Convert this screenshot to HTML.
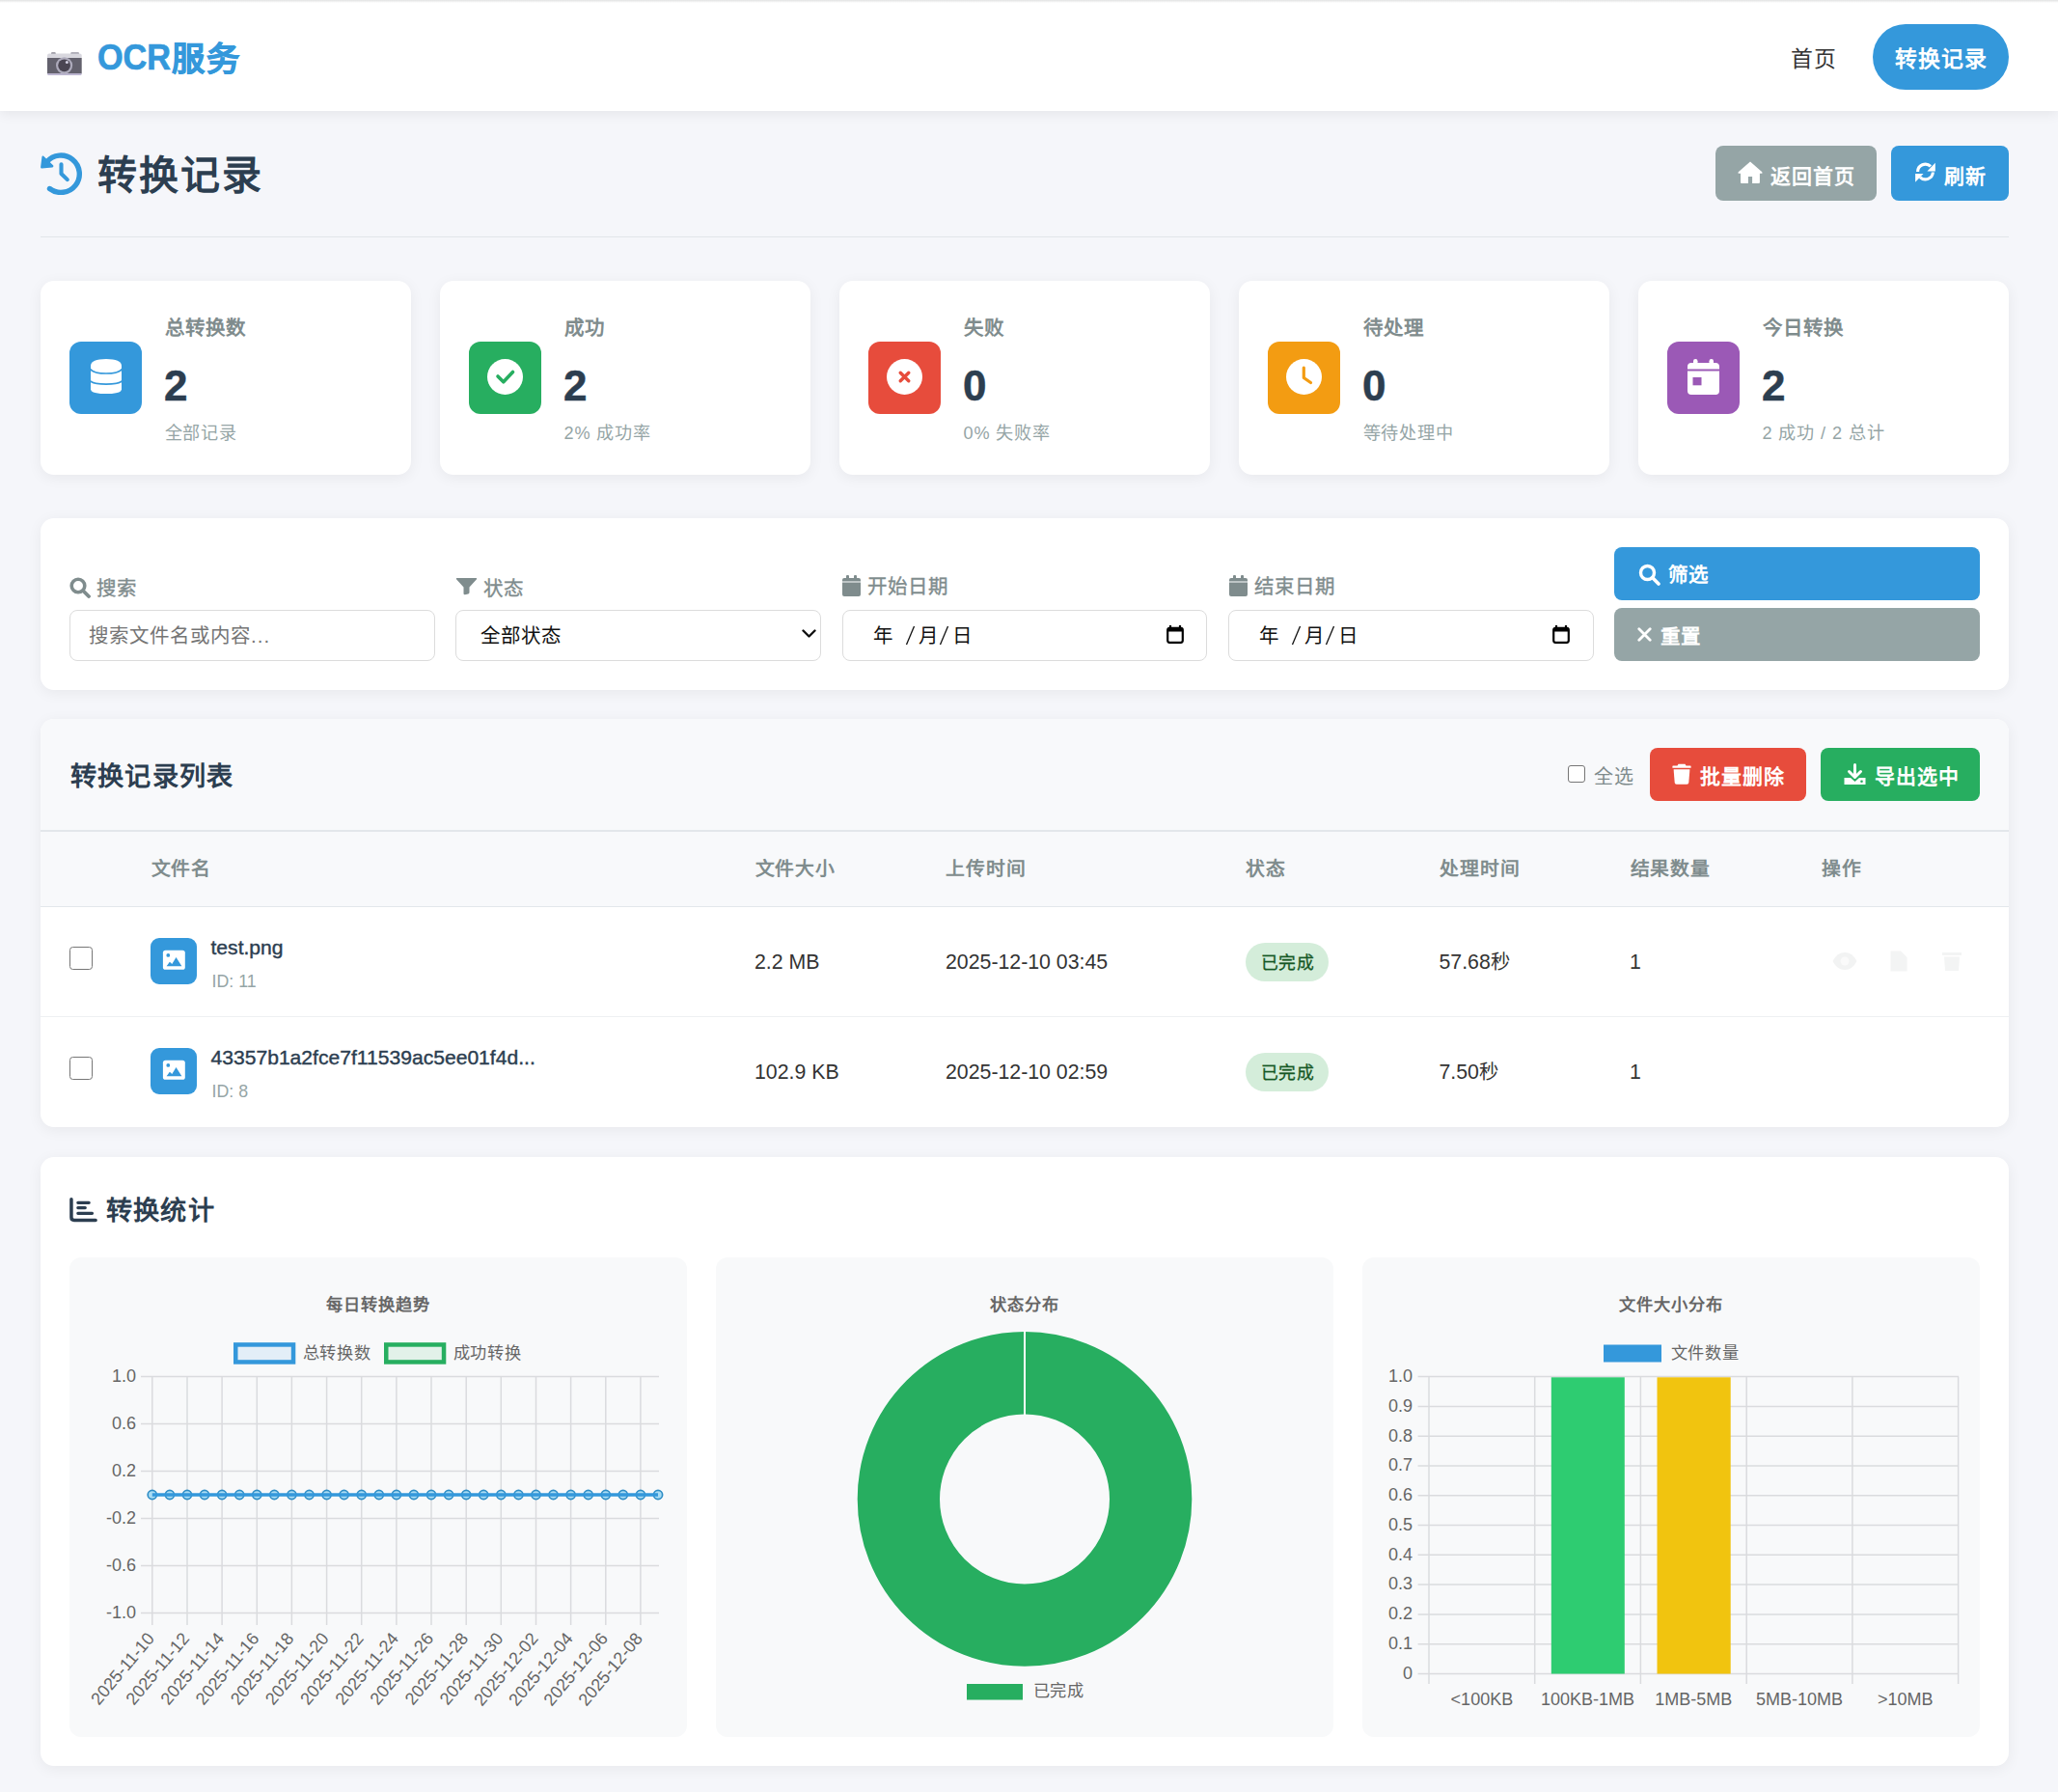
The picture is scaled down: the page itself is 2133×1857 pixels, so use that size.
<!DOCTYPE html>
<html lang="zh-CN">
<head>
<meta charset="utf-8">
<title>OCR服务 - 转换记录</title>
<style>
*{box-sizing:border-box;margin:0;padding:0}
html,body{width:2133px;height:1857px;overflow:hidden}
body{position:relative;background:#f5f6fa;font-family:"Liberation Sans",sans-serif;color:#333}
.a{position:absolute;white-space:nowrap}
.card{position:absolute;background:#fff;border-radius:14px;box-shadow:0 3px 15px rgba(0,0,0,0.06)}
</style>
</head>
<body>

<div class="a" style="left:0.0px;top:0.0px;width:2133.0px;height:115.0px;background:#fff;border-radius:0px;box-shadow:0 3px 12px rgba(0,0,0,0.07)"></div>
<div class="a" style="left:0.0px;top:0.0px;width:2133.0px;height:3.0px;background:linear-gradient(#e2e3e3,#fff);border-radius:0px;"></div>
<svg class="a" style="left:49.0px;top:53.0px;" width="37" height="26" viewBox="0 0 37 26">
  <rect x="4" y="1.2" width="4.8" height="2.4" rx="1" fill="#85838f"/>
  <rect x="24.2" y="1.2" width="8.8" height="2.4" rx="1" fill="#9593a0"/>
  <path d="M0 4.5 Q0 2.4 2 2.4 L33.7 2.4 Q35.7 2.4 35.7 4.5 L35.7 7.2 L0 7.2 Z" fill="#d8d7de"/>
  <rect x="0" y="7" width="35.7" height="16.2" fill="#63616d"/>
  <path d="M0 23 L35.7 23 L35.7 23.8 Q35.7 24.9 34.6 24.9 L1.1 24.9 Q0 24.9 0 23.8 Z" fill="#bcb6d0"/>
  <circle cx="17.6" cy="14.8" r="8.6" fill="#adaabb"/>
  <circle cx="17.6" cy="14.8" r="6.4" fill="#4a4552"/>
  <circle cx="20.4" cy="11.6" r="1.5" fill="#d3d0e2"/></svg>
<div class="a" style="left:101px;top:40px;font-size:36px;line-height:40px;font-weight:700;color:#3498db;-webkit-text-stroke:0.7px #3498db"><span style="display:inline-block;transform:scaleX(0.95);transform-origin:0 0;margin-right:-3px">OCR</span><span style="font-size:34.3px;letter-spacing:1.7px;position:relative;top:1px">服务</span></div>
<div class="a" style="left:1856.0px;top:49.5px;font-size:22.87px;line-height:22.9px;font-weight:400;color:#333;letter-spacing:1.13px;">首页</div>
<div class="a" style="left:1941.0px;top:25.0px;width:141.0px;height:68.0px;background:#3498db;border-radius:34px;"></div>
<div class="a" style="left:1963.5px;top:49.5px;font-size:22.87px;line-height:22.9px;font-weight:700;color:#fff;letter-spacing:1.13px;">转换记录</div>
<svg class="a" style="left:42.0px;top:158.0px;" width="44" height="44" viewBox="0 0 44 44">
  <path d="M6.4 9.9 A19.2 19.2 0 1 1 9.5 37.5" fill="none" stroke="#3498db" stroke-width="5.4" stroke-linecap="round"/>
  <path d="M2.6 4.8 L12.2 14.2 L1.3 15.3 Z" fill="#3498db" stroke="#3498db" stroke-width="2.4" stroke-linejoin="round"/>
  <path d="M21.5 12.3 L21.5 22 L27.8 28.1" fill="none" stroke="#3498db" stroke-width="4.1" stroke-linecap="round" stroke-linejoin="round"/></svg>
<div class="a" style="left:101.0px;top:162.0px;font-size:40.98px;line-height:41.0px;font-weight:700;color:#2c3e50;letter-spacing:2.02px;">转换记录</div>
<div class="a" style="left:1778.0px;top:151.0px;width:167.0px;height:57.0px;background:#95a5a6;border-radius:8px;"></div>
<svg class="a" style="left:1796.0px;top:162.0px;" width="36" height="34" viewBox="0 0 36 34"><path d="M18 5.5 L30.3 16.3 Q31.2 17.8 29.6 17.8 L27.9 17.8 L27.9 26.9 Q27.9 27.9 26.9 27.9 L20.1 27.9 L20.1 21.1 L15.9 21.1 L15.9 27.9 L9 27.9 Q8 27.9 8 26.9 L8 17.8 L6.4 17.8 Q4.8 17.8 5.7 16.3 Z" fill="#fff"/></svg>
<div class="a" style="left:1834.5px;top:171.5px;font-size:20.97px;line-height:21.0px;font-weight:700;color:#fff;letter-spacing:1.03px;">返回首页</div>
<div class="a" style="left:1960.0px;top:151.0px;width:122.0px;height:57.0px;background:#3498db;border-radius:8px;"></div>
<svg class="a" style="left:1980.0px;top:162.0px;" width="32" height="32" viewBox="0 0 32 32"><path d="M7.6 16 A7.9 7.9 0 0 1 21 10.4" fill="none" stroke="#fff" stroke-width="3.1"/><path d="M25.8 6.7 L25.8 15.5 L17.4 15.5 Z" fill="#fff"/><path d="M23.4 16.5 A7.9 7.9 0 0 1 10 21.6" fill="none" stroke="#fff" stroke-width="3.1"/><path d="M5.1 18 L13.5 18 L5.1 26.8 Z" fill="#fff"/></svg>
<div class="a" style="left:2014.5px;top:171.5px;font-size:20.97px;line-height:21.0px;font-weight:700;color:#fff;letter-spacing:1.03px;">刷新</div>
<div class="a" style="left:42.0px;top:245.0px;width:2040.0px;height:1.2px;background:#e2e5e9;border-radius:0px;"></div>
<div class="card" style="left:42px;top:291px;width:384px;height:201px"></div>
<div class="a" style="left:72.0px;top:354.0px;width:75.0px;height:75.0px;background:#3498db;border-radius:12px;"></div>
<svg class="a" style="left:93.7px;top:372.4px;" width="32" height="36" viewBox="0 0 32 36"><path d="M0 6.8 Q0.5 0 16 0 Q31.5 0 32 6.8 L32 31.6 Q31.5 36.2 16 36.2 Q0.5 36.2 0 31.6 Z" fill="#fff"/>
   <path d="M-0.5 10.4 C4 16.5 28 16.5 32.5 10.4" fill="none" stroke="#3498db" stroke-width="1.7"/>
   <path d="M-0.5 22.8 C4 27.2 28 27.2 32.5 22.8" fill="none" stroke="#3498db" stroke-width="1.7"/></svg>
<div class="a" style="left:170.5px;top:329.8px;font-size:20.49px;line-height:20.5px;font-weight:700;color:#7f8c8d;letter-spacing:1.01px;">总转换数</div>
<div class="a" style="left:170px;top:377.5px;font-size:44px;line-height:44px;font-weight:700;color:#2c3e50;-webkit-text-stroke:0.5px #2c3e50">2</div>
<div class="a" style="left:170.5px;top:440.0px;font-size:18.11px;line-height:18.1px;font-weight:400;color:#95a5a6;letter-spacing:0.89px;">全部记录</div>
<div class="card" style="left:456px;top:291px;width:384px;height:201px"></div>
<div class="a" style="left:486.0px;top:354.0px;width:75.0px;height:75.0px;background:#27ae60;border-radius:12px;"></div>
<svg class="a" style="left:504.8px;top:372.0px;" width="37" height="37" viewBox="0 0 37 37"><circle cx="18.5" cy="18.5" r="18.5" fill="#fff"/><path d="M11 18 L16.8 23.8 L26.5 13.5" fill="none" stroke="#27ae60" stroke-width="3.6" stroke-linecap="round" stroke-linejoin="round"/></svg>
<div class="a" style="left:584.5px;top:329.8px;font-size:20.49px;line-height:20.5px;font-weight:700;color:#7f8c8d;letter-spacing:1.01px;">成功</div>
<div class="a" style="left:584px;top:377.5px;font-size:44px;line-height:44px;font-weight:700;color:#2c3e50;-webkit-text-stroke:0.5px #2c3e50">2</div>
<div class="a" style="left:584.5px;top:440.0px;font-size:18.11px;line-height:18.1px;font-weight:400;color:#95a5a6;letter-spacing:0.89px;">2% 成功率</div>
<div class="card" style="left:870px;top:291px;width:384px;height:201px"></div>
<div class="a" style="left:900.0px;top:354.0px;width:75.0px;height:75.0px;background:#e74c3c;border-radius:12px;"></div>
<svg class="a" style="left:918.8px;top:372.0px;" width="37" height="37" viewBox="0 0 37 37"><circle cx="18.5" cy="18.5" r="18.5" fill="#fff"/><path d="M14.2 14.2 L22.8 22.8 M22.8 14.2 L14.2 22.8" fill="none" stroke="#e74c3c" stroke-width="3.4" stroke-linecap="round"/></svg>
<div class="a" style="left:998.5px;top:329.8px;font-size:20.49px;line-height:20.5px;font-weight:700;color:#7f8c8d;letter-spacing:1.01px;">失败</div>
<div class="a" style="left:998px;top:377.5px;font-size:44px;line-height:44px;font-weight:700;color:#2c3e50;-webkit-text-stroke:0.5px #2c3e50">0</div>
<div class="a" style="left:998.5px;top:440.0px;font-size:18.11px;line-height:18.1px;font-weight:400;color:#95a5a6;letter-spacing:0.89px;">0% 失败率</div>
<div class="card" style="left:1284px;top:291px;width:384px;height:201px"></div>
<div class="a" style="left:1314.0px;top:354.0px;width:75.0px;height:75.0px;background:#f39c12;border-radius:12px;"></div>
<svg class="a" style="left:1332.8px;top:372.0px;" width="37" height="37" viewBox="0 0 37 37"><circle cx="18.5" cy="18.5" r="18.5" fill="#fff"/><path d="M18.3 9 L18.3 19.5 L25.5 24.5" fill="none" stroke="#f39c12" stroke-width="3.2" stroke-linecap="round" stroke-linejoin="round"/></svg>
<div class="a" style="left:1412.5px;top:329.8px;font-size:20.49px;line-height:20.5px;font-weight:700;color:#7f8c8d;letter-spacing:1.01px;">待处理</div>
<div class="a" style="left:1412px;top:377.5px;font-size:44px;line-height:44px;font-weight:700;color:#2c3e50;-webkit-text-stroke:0.5px #2c3e50">0</div>
<div class="a" style="left:1412.5px;top:440.0px;font-size:18.11px;line-height:18.1px;font-weight:400;color:#95a5a6;letter-spacing:0.89px;">等待处理中</div>
<div class="card" style="left:1698px;top:291px;width:384px;height:201px"></div>
<div class="a" style="left:1728.0px;top:354.0px;width:75.0px;height:75.0px;background:#9b59b6;border-radius:12px;"></div>
<svg class="a" style="left:1749.3px;top:371.7px;" width="33" height="37" viewBox="0 0 33 37"><g fill="#fff"><rect x="6" y="0" width="4.5" height="7" rx="2.2"/><rect x="22.5" y="0" width="4.5" height="7" rx="2.2"/>
   <path d="M0 8 Q0 4 4 4 L29 4 Q33 4 33 8 L33 10.5 L0 10.5 Z"/>
   <path d="M0 12.5 L33 12.5 L33 33 Q33 37 29 37 L4 37 Q0 37 0 33 Z"/></g>
   <rect x="5.5" y="19" width="9" height="8.3" fill="#9b59b6"/></svg>
<div class="a" style="left:1826.5px;top:329.8px;font-size:20.49px;line-height:20.5px;font-weight:700;color:#7f8c8d;letter-spacing:1.01px;">今日转换</div>
<div class="a" style="left:1826px;top:377.5px;font-size:44px;line-height:44px;font-weight:700;color:#2c3e50;-webkit-text-stroke:0.5px #2c3e50">2</div>
<div class="a" style="left:1826.5px;top:440.0px;font-size:18.11px;line-height:18.1px;font-weight:400;color:#95a5a6;letter-spacing:0.89px;">2 成功 / 2 总计</div>
<div class="card" style="left:42px;top:537px;width:2040px;height:178px"></div>
<svg class="a" style="left:72.0px;top:598.0px;" width="22" height="22" viewBox="0 0 22 22"><circle cx="9" cy="9" r="6.8" fill="none" stroke="#7f8c8d" stroke-width="3.6"/><path d="M14 14 L20 20" stroke="#7f8c8d" stroke-width="3.8" stroke-linecap="round"/></svg>
<div class="a" style="left:100.0px;top:600.0px;font-size:20.49px;line-height:20.5px;font-weight:500;color:#7f8c8d;letter-spacing:1.01px;-webkit-text-stroke:0.35px #7f8c8d">搜索</div>
<svg class="a" style="left:472.3px;top:598.0px;" width="23" height="19" viewBox="0 0 23 19"><path d="M1.5 1 Q0.5 1 1 2.2 L8.5 10.5 L8.5 17 Q8.5 18.5 10 18.3 L13.2 17.5 Q14.5 17.2 14.5 15.8 L14.5 10.5 L22 2.2 Q22.5 1 21.5 1 Z" fill="#7f8c8d"/></svg>
<div class="a" style="left:500.5px;top:600.0px;font-size:20.49px;line-height:20.5px;font-weight:500;color:#7f8c8d;letter-spacing:1.01px;-webkit-text-stroke:0.35px #7f8c8d">状态</div>
<svg class="a" style="left:873.0px;top:596.0px;" width="19" height="22" viewBox="0 0 19 22"><g fill="#7f8c8d"><rect x="4" y="0" width="3" height="4" rx="1"/><rect x="12" y="0" width="3" height="4" rx="1"/><path d="M0 5 Q0 3 2 3 L17 3 Q19 3 19 5 L19 6.5 L0 6.5 Z"/><path d="M0 7.5 L19 7.5 L19 20 Q19 22 17 22 L2 22 Q0 22 0 20 Z"/></g></svg>
<div class="a" style="left:899.0px;top:597.5px;font-size:20.49px;line-height:20.5px;font-weight:500;color:#7f8c8d;letter-spacing:1.01px;-webkit-text-stroke:0.35px #7f8c8d">开始日期</div>
<svg class="a" style="left:1273.5px;top:596.0px;" width="19" height="22" viewBox="0 0 19 22"><g fill="#7f8c8d"><rect x="4" y="0" width="3" height="4" rx="1"/><rect x="12" y="0" width="3" height="4" rx="1"/><path d="M0 5 Q0 3 2 3 L17 3 Q19 3 19 5 L19 6.5 L0 6.5 Z"/><path d="M0 7.5 L19 7.5 L19 20 Q19 22 17 22 L2 22 Q0 22 0 20 Z"/></g></svg>
<div class="a" style="left:1299.5px;top:597.5px;font-size:20.49px;line-height:20.5px;font-weight:500;color:#7f8c8d;letter-spacing:1.01px;-webkit-text-stroke:0.35px #7f8c8d">结束日期</div>
<div class="a" style="left:72.0px;top:632px;width:378.8px;height:53px;border:1.5px solid #dcdcdc;border-radius:8px;background:#fff"></div>
<div class="a" style="left:472.3px;top:632px;width:378.8px;height:53px;border:1.5px solid #dcdcdc;border-radius:8px;background:#fff"></div>
<div class="a" style="left:872.6px;top:632px;width:378.8px;height:53px;border:1.5px solid #dcdcdc;border-radius:8px;background:#fff"></div>
<div class="a" style="left:1272.9px;top:632px;width:378.8px;height:53px;border:1.5px solid #dcdcdc;border-radius:8px;background:#fff"></div>
<div class="a" style="left:92.0px;top:648.5px;font-size:20.49px;line-height:20.5px;font-weight:400;color:#757575;letter-spacing:1.01px;">搜索文件名或内容...</div>
<div class="a" style="left:498.0px;top:648.5px;font-size:20.49px;line-height:20.5px;font-weight:400;color:#111;letter-spacing:1.01px;">全部状态</div>
<svg class="a" style="left:831.0px;top:652.0px;" width="15" height="10" viewBox="0 0 15 10"><path d="M1.5 1.5 L7.5 7.5 L13.5 1.5" fill="none" stroke="#111" stroke-width="2.4" stroke-linecap="round" stroke-linejoin="round"/></svg>
<div class="a" style="left:905.1px;top:648.5px;font-size:20.49px;line-height:20.5px;font-weight:400;color:#111;letter-spacing:1.01px;">年</div>
<svg class="a" style="left:938.1px;top:648.0px;" width="11" height="21" viewBox="0 0 11 21"><path d="M9.5 1 L1.5 20" stroke="#111" stroke-width="1.3"/></svg>
<div class="a" style="left:952.1px;top:648.5px;font-size:20.49px;line-height:20.5px;font-weight:400;color:#111;letter-spacing:1.01px;">月</div>
<svg class="a" style="left:973.1px;top:648.0px;" width="11" height="21" viewBox="0 0 11 21"><path d="M9.5 1 L1.5 20" stroke="#111" stroke-width="1.3"/></svg>
<div class="a" style="left:986.6px;top:648.5px;font-size:20.49px;line-height:20.5px;font-weight:400;color:#111;letter-spacing:1.01px;">日</div>
<svg class="a" style="left:1209.1px;top:648.0px;" width="18" height="19" viewBox="0 0 18 19"><path d="M4 0.5 L4 3 M14 0.5 L14 3" stroke="#000" stroke-width="2.2" stroke-linecap="round"/><rect x="1.2" y="2.8" width="15.6" height="15" rx="2" fill="none" stroke="#000" stroke-width="2.2"/><rect x="1" y="3" width="16" height="3.5" fill="#000"/></svg>
<div class="a" style="left:1305.4px;top:648.5px;font-size:20.49px;line-height:20.5px;font-weight:400;color:#111;letter-spacing:1.01px;">年</div>
<svg class="a" style="left:1338.4px;top:648.0px;" width="11" height="21" viewBox="0 0 11 21"><path d="M9.5 1 L1.5 20" stroke="#111" stroke-width="1.3"/></svg>
<div class="a" style="left:1352.4px;top:648.5px;font-size:20.49px;line-height:20.5px;font-weight:400;color:#111;letter-spacing:1.01px;">月</div>
<svg class="a" style="left:1373.4px;top:648.0px;" width="11" height="21" viewBox="0 0 11 21"><path d="M9.5 1 L1.5 20" stroke="#111" stroke-width="1.3"/></svg>
<div class="a" style="left:1386.9px;top:648.5px;font-size:20.49px;line-height:20.5px;font-weight:400;color:#111;letter-spacing:1.01px;">日</div>
<svg class="a" style="left:1609.4px;top:648.0px;" width="18" height="19" viewBox="0 0 18 19"><path d="M4 0.5 L4 3 M14 0.5 L14 3" stroke="#000" stroke-width="2.2" stroke-linecap="round"/><rect x="1.2" y="2.8" width="15.6" height="15" rx="2" fill="none" stroke="#000" stroke-width="2.2"/><rect x="1" y="3" width="16" height="3.5" fill="#000"/></svg>
<div class="a" style="left:1673.2px;top:567.0px;width:378.8px;height:55.0px;background:#3498db;border-radius:8px;"></div>
<svg class="a" style="left:1697.5px;top:583.5px;" width="23" height="23" viewBox="0 0 23 23"><circle cx="9.5" cy="9.5" r="7" fill="none" stroke="#fff" stroke-width="3.4"/><path d="M14.8 14.8 L21 21" stroke="#fff" stroke-width="3.6" stroke-linecap="round"/></svg>
<div class="a" style="left:1728.5px;top:586.0px;font-size:20.49px;line-height:20.5px;font-weight:700;color:#fff;letter-spacing:1.01px;">筛选</div>
<div class="a" style="left:1673.2px;top:630.0px;width:378.8px;height:55.0px;background:#95a5a6;border-radius:8px;"></div>
<svg class="a" style="left:1697.0px;top:649.5px;" width="15" height="15" viewBox="0 0 15 15"><path d="M1.8 1.8 L13.2 13.2 M13.2 1.8 L1.8 13.2" stroke="#fff" stroke-width="2.8" stroke-linecap="round"/></svg>
<div class="a" style="left:1721.0px;top:649.5px;font-size:20.49px;line-height:20.5px;font-weight:700;color:#fff;letter-spacing:1.01px;">重置</div>
<div class="card" style="left:42px;top:745px;width:2040px;height:423px;overflow:hidden"><div style="position:absolute;left:0;top:0;width:2040px;height:194px;background:#f8f9fb"></div><div style="position:absolute;left:0;top:115px;width:2040px;height:1.5px;background:#e3e7eb"></div><div style="position:absolute;left:0;top:193.5px;width:2040px;height:1.5px;background:#e3e7eb"></div><div style="position:absolute;left:0;top:308px;width:2040px;height:1px;background:#eef0f2"></div></div>
<div class="a" style="left:72.5px;top:790.5px;font-size:27.16px;line-height:27.2px;font-weight:700;color:#2c3e50;letter-spacing:1.34px;">转换记录列表</div>
<div class="a" style="left:1625px;top:793px;width:18px;height:18px;border:1.5px solid #767676;border-radius:3px;background:#fff"></div>
<div class="a" style="left:1652.0px;top:794.5px;font-size:20.01px;line-height:20.0px;font-weight:400;color:#7f8c8d;letter-spacing:0.99px;">全选</div>
<div class="a" style="left:1710.0px;top:775.0px;width:162.0px;height:55.0px;background:#e74c3c;border-radius:8px;"></div>
<svg class="a" style="left:1733.0px;top:791.0px;" width="20" height="22" viewBox="0 0 20 22"><path d="M6.5 0.8 L13.5 0.8 L14.5 2.6 L19 2.6 Q19.6 2.6 19.6 3.3 L19.6 4.8 L0.4 4.8 L0.4 3.3 Q0.4 2.6 1 2.6 L5.5 2.6 Z" fill="#fff"/><path d="M1.6 6.3 L18.4 6.3 L17.3 20 Q17.1 21.7 15.4 21.7 L4.6 21.7 Q2.9 21.7 2.7 20 Z" fill="#fff"/></svg>
<div class="a" style="left:1761.5px;top:793.5px;font-size:20.97px;line-height:21.0px;font-weight:700;color:#fff;letter-spacing:1.03px;">批量删除</div>
<div class="a" style="left:1887.0px;top:775.0px;width:165.0px;height:55.0px;background:#27ae60;border-radius:8px;"></div>
<svg class="a" style="left:1910.5px;top:790.5px;" width="23" height="23" viewBox="0 0 23 23"><path d="M11.5 1.5 L11.5 13" stroke="#fff" stroke-width="3" stroke-linecap="round"/><path d="M5.5 8.5 L11.5 14.5 L17.5 8.5" fill="none" stroke="#fff" stroke-width="3" stroke-linecap="round" stroke-linejoin="round"/><path d="M0.5 15 L7 15 L11.5 19 L16 15 L22.5 15 L22.5 22 L0.5 22 Z" fill="#fff"/><circle cx="18.5" cy="18.7" r="1.3" fill="#27ae60"/></svg>
<div class="a" style="left:1942.5px;top:793.5px;font-size:20.97px;line-height:21.0px;font-weight:700;color:#fff;letter-spacing:1.03px;">导出选中</div>
<div class="a" style="left:156.5px;top:891.0px;font-size:19.82px;line-height:19.8px;font-weight:700;color:#7f8c8d;letter-spacing:0.98px;">文件名</div>
<div class="a" style="left:782.5px;top:891.0px;font-size:19.82px;line-height:19.8px;font-weight:700;color:#7f8c8d;letter-spacing:0.98px;">文件大小</div>
<div class="a" style="left:980.0px;top:891.0px;font-size:19.82px;line-height:19.8px;font-weight:700;color:#7f8c8d;letter-spacing:0.98px;">上传时间</div>
<div class="a" style="left:1291.0px;top:891.0px;font-size:19.82px;line-height:19.8px;font-weight:700;color:#7f8c8d;letter-spacing:0.98px;">状态</div>
<div class="a" style="left:1492.0px;top:891.0px;font-size:19.82px;line-height:19.8px;font-weight:700;color:#7f8c8d;letter-spacing:0.98px;">处理时间</div>
<div class="a" style="left:1689.5px;top:891.0px;font-size:19.82px;line-height:19.8px;font-weight:700;color:#7f8c8d;letter-spacing:0.98px;">结果数量</div>
<div class="a" style="left:1888.0px;top:891.0px;font-size:19.82px;line-height:19.8px;font-weight:700;color:#7f8c8d;letter-spacing:0.98px;">操作</div>
<div class="a" style="left:72px;top:981px;width:23.5px;height:23.5px;border:1.6px solid #767676;border-radius:3.5px;background:#fff"></div>
<svg class="a" style="left:156.0px;top:972.0px;" width="48" height="48" viewBox="0 0 48 48"><rect x="0" y="0" width="48" height="48" rx="9" fill="#3498db"/><rect x="12.9" y="12.75" width="22.9" height="20" rx="2.6" fill="#fff"/><circle cx="18.3" cy="17.9" r="1.9" fill="#3498db"/><path d="M16.6 29.3 L19.9 24.8 L22.3 27 L26.5 20 L32.4 29.3 Z" fill="#3498db"/></svg>
<div class="a" style="left:218.5px;top:970px;font-size:21.1px;line-height:24px;font-weight:400;color:#2c3e50;-webkit-text-stroke:0.4px #2c3e50">test.png</div>
<div class="a" style="left:219.5px;top:1006.5px;font-size:17.8px;line-height:20px;color:#95a5a6">ID: 11</div>
<div class="a" style="left:782px;top:985px;font-size:21.3px;line-height:24px;color:#333">2.2 MB</div>
<div class="a" style="left:980px;top:985px;font-size:21.3px;line-height:24px;color:#333">2025-12-10 03:45</div>
<div class="a" style="left:1291.0px;top:977.0px;width:86.0px;height:40.0px;background:#d4edda;border-radius:20px;"></div>
<div class="a" style="left:1306.5px;top:989.5px;font-size:17.82px;line-height:17.8px;font-weight:500;color:#155724;letter-spacing:0.88px;-webkit-text-stroke:0.3px #155724">已完成</div>
<div class="a" style="left:1491.5px;top:985px;font-size:21.3px;line-height:24px;color:#333">57.68<span style="font-size:20.3px;letter-spacing:1px;position:relative;top:-0.5px">秒</span></div>
<div class="a" style="left:1689px;top:985px;font-size:21.3px;line-height:24px;color:#333">1</div>
<svg class="a" style="left:1898.5px;top:985.5px;" width="26" height="20" viewBox="0 0 26 20"><path d="M13 1 Q21 1 25.5 10 Q21 19 13 19 Q5 19 0.5 10 Q5 1 13 1 Z" fill="#f2f3f3"/><circle cx="13" cy="10" r="4.5" fill="#fafafa"/></svg>
<svg class="a" style="left:1958.5px;top:984.5px;" width="18" height="22" viewBox="0 0 18 22"><path d="M0.5 0.5 L11 0.5 L17.5 7 L17.5 21.5 L0.5 21.5 Z" fill="#f3f4f4"/></svg>
<svg class="a" style="left:2012.5px;top:986.5px;" width="20" height="19" viewBox="0 0 20 19"><rect x="0" y="0" width="20" height="3" fill="#f3f4f4"/><path d="M2 4.5 L18 4.5 L17 19 L3 19 Z" fill="#f3f4f4"/></svg>
<div class="a" style="left:72px;top:1095px;width:23.5px;height:23.5px;border:1.6px solid #767676;border-radius:3.5px;background:#fff"></div>
<svg class="a" style="left:156.0px;top:1086.0px;" width="48" height="48" viewBox="0 0 48 48"><rect x="0" y="0" width="48" height="48" rx="9" fill="#3498db"/><rect x="12.9" y="12.75" width="22.9" height="20" rx="2.6" fill="#fff"/><circle cx="18.3" cy="17.9" r="1.9" fill="#3498db"/><path d="M16.6 29.3 L19.9 24.8 L22.3 27 L26.5 20 L32.4 29.3 Z" fill="#3498db"/></svg>
<div class="a" style="left:218.5px;top:1084px;font-size:21.1px;line-height:24px;font-weight:400;color:#2c3e50;-webkit-text-stroke:0.4px #2c3e50">43357b1a2fce7f11539ac5ee01f4d...</div>
<div class="a" style="left:219.5px;top:1120.5px;font-size:17.8px;line-height:20px;color:#95a5a6">ID: 8</div>
<div class="a" style="left:782px;top:1099px;font-size:21.3px;line-height:24px;color:#333">102.9 KB</div>
<div class="a" style="left:980px;top:1099px;font-size:21.3px;line-height:24px;color:#333">2025-12-10 02:59</div>
<div class="a" style="left:1291.0px;top:1091.0px;width:86.0px;height:40.0px;background:#d4edda;border-radius:20px;"></div>
<div class="a" style="left:1306.5px;top:1103.5px;font-size:17.82px;line-height:17.8px;font-weight:500;color:#155724;letter-spacing:0.88px;-webkit-text-stroke:0.3px #155724">已完成</div>
<div class="a" style="left:1491.5px;top:1099px;font-size:21.3px;line-height:24px;color:#333">7.50<span style="font-size:20.3px;letter-spacing:1px;position:relative;top:-0.5px">秒</span></div>
<div class="a" style="left:1689px;top:1099px;font-size:21.3px;line-height:24px;color:#333">1</div>
<div class="card" style="left:42px;top:1198.5px;width:2040px;height:631.5px"></div>
<svg class="a" style="left:72.0px;top:1240.5px;" width="30" height="27" viewBox="0 0 30 27"><path d="M1.95 1.8 L1.95 20.5 Q1.95 23.4 4.9 23.4 L27.1 23.4" fill="none" stroke="#2c3e50" stroke-width="3.5" stroke-linecap="round" stroke-linejoin="round"/><path d="M8.8 5.3 L20.2 5.3 M8.8 10.6 L16.3 10.6 M8.8 16.3 L23.5 16.3" stroke="#2c3e50" stroke-width="3.2" stroke-linecap="round"/></svg>
<div class="a" style="left:109.5px;top:1240.5px;font-size:27.16px;line-height:27.2px;font-weight:700;color:#2c3e50;letter-spacing:1.34px;">转换统计</div>
<div class="a" style="left:72.0px;top:1303.0px;width:639.6px;height:497.0px;background:#f8f9fa;border-radius:12px;"></div>
<div class="a" style="left:742.4px;top:1303.0px;width:639.6px;height:497.0px;background:#f8f9fa;border-radius:12px;"></div>
<div class="a" style="left:1412.2px;top:1303.0px;width:639.6px;height:497.0px;background:#f8f9fa;border-radius:12px;"></div>
<svg class="a" style="left:0;top:0" width="2133" height="1857" viewBox="0 0 2133 1857"><text x="392" y="1358" text-anchor="middle" style="font-family:'Liberation Sans',sans-serif;font-size:17.2px;font-weight:700;letter-spacing:0.9px" fill="#666">每日转换趋势</text><rect x="244.25" y="1393.45" width="59.8" height="18" fill="#e3eef7" stroke="#3498db" stroke-width="4.5"/><text x="313.5" y="1408.3" style="font-family:'Liberation Sans',sans-serif;font-size:17.2px;letter-spacing:0.9px" fill="#666">总转换数</text><rect x="400.25" y="1393.45" width="59.8" height="18" fill="#e2f1e9" stroke="#27ae60" stroke-width="4.5"/><text x="469.5" y="1408.3" style="font-family:'Liberation Sans',sans-serif;font-size:17.2px;letter-spacing:0.9px" fill="#666">成功转换</text><line x1="146" y1="1426.5" x2="683" y2="1426.5" stroke="#dadbde" stroke-width="1.5"/><text x="141" y="1432.0" text-anchor="end" style="font-family:'Liberation Sans',sans-serif;font-size:18px" fill="#666">1.0</text><line x1="146" y1="1475.5" x2="683" y2="1475.5" stroke="#dadbde" stroke-width="1.5"/><text x="141" y="1481.0" text-anchor="end" style="font-family:'Liberation Sans',sans-serif;font-size:18px" fill="#666">0.6</text><line x1="146" y1="1524.5" x2="683" y2="1524.5" stroke="#dadbde" stroke-width="1.5"/><text x="141" y="1530.0" text-anchor="end" style="font-family:'Liberation Sans',sans-serif;font-size:18px" fill="#666">0.2</text><line x1="146" y1="1573.5" x2="683" y2="1573.5" stroke="#dadbde" stroke-width="1.5"/><text x="141" y="1579.0" text-anchor="end" style="font-family:'Liberation Sans',sans-serif;font-size:18px" fill="#666">-0.2</text><line x1="146" y1="1622.5" x2="683" y2="1622.5" stroke="#dadbde" stroke-width="1.5"/><text x="141" y="1628.0" text-anchor="end" style="font-family:'Liberation Sans',sans-serif;font-size:18px" fill="#666">-0.6</text><line x1="146" y1="1671.5" x2="683" y2="1671.5" stroke="#dadbde" stroke-width="1.5"/><text x="141" y="1677.0" text-anchor="end" style="font-family:'Liberation Sans',sans-serif;font-size:18px" fill="#666">-1.0</text><line x1="157.8" y1="1426.5" x2="157.8" y2="1684" stroke="#dadbde" stroke-width="1.5"/><text transform="translate(156.3,1694.5) rotate(-50)" text-anchor="end" dominant-baseline="central" style="font-family:'Liberation Sans',sans-serif;font-size:18px" fill="#666">2025-11-10</text><line x1="194.0" y1="1426.5" x2="194.0" y2="1684" stroke="#dadbde" stroke-width="1.5"/><text transform="translate(192.5,1694.5) rotate(-50)" text-anchor="end" dominant-baseline="central" style="font-family:'Liberation Sans',sans-serif;font-size:18px" fill="#666">2025-11-12</text><line x1="230.1" y1="1426.5" x2="230.1" y2="1684" stroke="#dadbde" stroke-width="1.5"/><text transform="translate(228.6,1694.5) rotate(-50)" text-anchor="end" dominant-baseline="central" style="font-family:'Liberation Sans',sans-serif;font-size:18px" fill="#666">2025-11-14</text><line x1="266.3" y1="1426.5" x2="266.3" y2="1684" stroke="#dadbde" stroke-width="1.5"/><text transform="translate(264.8,1694.5) rotate(-50)" text-anchor="end" dominant-baseline="central" style="font-family:'Liberation Sans',sans-serif;font-size:18px" fill="#666">2025-11-16</text><line x1="302.4" y1="1426.5" x2="302.4" y2="1684" stroke="#dadbde" stroke-width="1.5"/><text transform="translate(300.9,1694.5) rotate(-50)" text-anchor="end" dominant-baseline="central" style="font-family:'Liberation Sans',sans-serif;font-size:18px" fill="#666">2025-11-18</text><line x1="338.6" y1="1426.5" x2="338.6" y2="1684" stroke="#dadbde" stroke-width="1.5"/><text transform="translate(337.1,1694.5) rotate(-50)" text-anchor="end" dominant-baseline="central" style="font-family:'Liberation Sans',sans-serif;font-size:18px" fill="#666">2025-11-20</text><line x1="374.7" y1="1426.5" x2="374.7" y2="1684" stroke="#dadbde" stroke-width="1.5"/><text transform="translate(373.2,1694.5) rotate(-50)" text-anchor="end" dominant-baseline="central" style="font-family:'Liberation Sans',sans-serif;font-size:18px" fill="#666">2025-11-22</text><line x1="410.9" y1="1426.5" x2="410.9" y2="1684" stroke="#dadbde" stroke-width="1.5"/><text transform="translate(409.4,1694.5) rotate(-50)" text-anchor="end" dominant-baseline="central" style="font-family:'Liberation Sans',sans-serif;font-size:18px" fill="#666">2025-11-24</text><line x1="447.0" y1="1426.5" x2="447.0" y2="1684" stroke="#dadbde" stroke-width="1.5"/><text transform="translate(445.5,1694.5) rotate(-50)" text-anchor="end" dominant-baseline="central" style="font-family:'Liberation Sans',sans-serif;font-size:18px" fill="#666">2025-11-26</text><line x1="483.2" y1="1426.5" x2="483.2" y2="1684" stroke="#dadbde" stroke-width="1.5"/><text transform="translate(481.7,1694.5) rotate(-50)" text-anchor="end" dominant-baseline="central" style="font-family:'Liberation Sans',sans-serif;font-size:18px" fill="#666">2025-11-28</text><line x1="519.3" y1="1426.5" x2="519.3" y2="1684" stroke="#dadbde" stroke-width="1.5"/><text transform="translate(517.8,1694.5) rotate(-50)" text-anchor="end" dominant-baseline="central" style="font-family:'Liberation Sans',sans-serif;font-size:18px" fill="#666">2025-11-30</text><line x1="555.5" y1="1426.5" x2="555.5" y2="1684" stroke="#dadbde" stroke-width="1.5"/><text transform="translate(554.0,1694.5) rotate(-50)" text-anchor="end" dominant-baseline="central" style="font-family:'Liberation Sans',sans-serif;font-size:18px" fill="#666">2025-12-02</text><line x1="591.6" y1="1426.5" x2="591.6" y2="1684" stroke="#dadbde" stroke-width="1.5"/><text transform="translate(590.1,1694.5) rotate(-50)" text-anchor="end" dominant-baseline="central" style="font-family:'Liberation Sans',sans-serif;font-size:18px" fill="#666">2025-12-04</text><line x1="627.8" y1="1426.5" x2="627.8" y2="1684" stroke="#dadbde" stroke-width="1.5"/><text transform="translate(626.3,1694.5) rotate(-50)" text-anchor="end" dominant-baseline="central" style="font-family:'Liberation Sans',sans-serif;font-size:18px" fill="#666">2025-12-06</text><line x1="663.9" y1="1426.5" x2="663.9" y2="1684" stroke="#dadbde" stroke-width="1.5"/><text transform="translate(662.4,1694.5) rotate(-50)" text-anchor="end" dominant-baseline="central" style="font-family:'Liberation Sans',sans-serif;font-size:18px" fill="#666">2025-12-08</text><circle cx="157.8" cy="1549.0" r="4.6" fill="#a9dcf4" stroke="#2f8ec6" stroke-width="1.7"/><circle cx="175.9" cy="1549.0" r="4.6" fill="#a9dcf4" stroke="#2f8ec6" stroke-width="1.7"/><circle cx="194.0" cy="1549.0" r="4.6" fill="#a9dcf4" stroke="#2f8ec6" stroke-width="1.7"/><circle cx="212.0" cy="1549.0" r="4.6" fill="#a9dcf4" stroke="#2f8ec6" stroke-width="1.7"/><circle cx="230.1" cy="1549.0" r="4.6" fill="#a9dcf4" stroke="#2f8ec6" stroke-width="1.7"/><circle cx="248.2" cy="1549.0" r="4.6" fill="#a9dcf4" stroke="#2f8ec6" stroke-width="1.7"/><circle cx="266.3" cy="1549.0" r="4.6" fill="#a9dcf4" stroke="#2f8ec6" stroke-width="1.7"/><circle cx="284.3" cy="1549.0" r="4.6" fill="#a9dcf4" stroke="#2f8ec6" stroke-width="1.7"/><circle cx="302.4" cy="1549.0" r="4.6" fill="#a9dcf4" stroke="#2f8ec6" stroke-width="1.7"/><circle cx="320.5" cy="1549.0" r="4.6" fill="#a9dcf4" stroke="#2f8ec6" stroke-width="1.7"/><circle cx="338.6" cy="1549.0" r="4.6" fill="#a9dcf4" stroke="#2f8ec6" stroke-width="1.7"/><circle cx="356.6" cy="1549.0" r="4.6" fill="#a9dcf4" stroke="#2f8ec6" stroke-width="1.7"/><circle cx="374.7" cy="1549.0" r="4.6" fill="#a9dcf4" stroke="#2f8ec6" stroke-width="1.7"/><circle cx="392.8" cy="1549.0" r="4.6" fill="#a9dcf4" stroke="#2f8ec6" stroke-width="1.7"/><circle cx="410.9" cy="1549.0" r="4.6" fill="#a9dcf4" stroke="#2f8ec6" stroke-width="1.7"/><circle cx="428.9" cy="1549.0" r="4.6" fill="#a9dcf4" stroke="#2f8ec6" stroke-width="1.7"/><circle cx="447.0" cy="1549.0" r="4.6" fill="#a9dcf4" stroke="#2f8ec6" stroke-width="1.7"/><circle cx="465.1" cy="1549.0" r="4.6" fill="#a9dcf4" stroke="#2f8ec6" stroke-width="1.7"/><circle cx="483.2" cy="1549.0" r="4.6" fill="#a9dcf4" stroke="#2f8ec6" stroke-width="1.7"/><circle cx="501.2" cy="1549.0" r="4.6" fill="#a9dcf4" stroke="#2f8ec6" stroke-width="1.7"/><circle cx="519.3" cy="1549.0" r="4.6" fill="#a9dcf4" stroke="#2f8ec6" stroke-width="1.7"/><circle cx="537.4" cy="1549.0" r="4.6" fill="#a9dcf4" stroke="#2f8ec6" stroke-width="1.7"/><circle cx="555.5" cy="1549.0" r="4.6" fill="#a9dcf4" stroke="#2f8ec6" stroke-width="1.7"/><circle cx="573.5" cy="1549.0" r="4.6" fill="#a9dcf4" stroke="#2f8ec6" stroke-width="1.7"/><circle cx="591.6" cy="1549.0" r="4.6" fill="#a9dcf4" stroke="#2f8ec6" stroke-width="1.7"/><circle cx="609.7" cy="1549.0" r="4.6" fill="#a9dcf4" stroke="#2f8ec6" stroke-width="1.7"/><circle cx="627.8" cy="1549.0" r="4.6" fill="#a9dcf4" stroke="#2f8ec6" stroke-width="1.7"/><circle cx="645.8" cy="1549.0" r="4.6" fill="#a9dcf4" stroke="#2f8ec6" stroke-width="1.7"/><circle cx="663.9" cy="1549.0" r="4.6" fill="#a9dcf4" stroke="#2f8ec6" stroke-width="1.7"/><circle cx="682.0" cy="1549.0" r="4.6" fill="#a9dcf4" stroke="#2f8ec6" stroke-width="1.7"/><line x1="157.8" y1="1549.0" x2="682" y2="1549.0" stroke="#3498db" stroke-width="3.6"/><text x="1062" y="1358" text-anchor="middle" style="font-family:'Liberation Sans',sans-serif;font-size:17.2px;font-weight:700;letter-spacing:0.9px" fill="#666">状态分布</text><circle cx="1062" cy="1553.4" r="130.65" fill="none" stroke="#27ae60" stroke-width="85.30000000000001"/><line x1="1062" y1="1379.1000000000001" x2="1062" y2="1466.4" stroke="#fff" stroke-width="2"/><rect x="1002" y="1745" width="58" height="16.5" fill="#27ae60"/><text x="1070.5" y="1758" style="font-family:'Liberation Sans',sans-serif;font-size:17.2px;letter-spacing:0.9px" fill="#666">已完成</text><text x="1732" y="1358" text-anchor="middle" style="font-family:'Liberation Sans',sans-serif;font-size:17.2px;font-weight:700;letter-spacing:0.9px" fill="#666">文件大小分布</text><rect x="1662" y="1393.5" width="60" height="18" fill="#3498db"/><text x="1731.5" y="1408.3" style="font-family:'Liberation Sans',sans-serif;font-size:17.2px;letter-spacing:0.9px" fill="#666">文件数量</text><line x1="1469.6" y1="1734.5" x2="2030" y2="1734.5" stroke="#dadbde" stroke-width="1.5"/><text x="1464" y="1739.8" text-anchor="end" style="font-family:'Liberation Sans',sans-serif;font-size:18px" fill="#666">0</text><line x1="1469.6" y1="1703.7" x2="2030" y2="1703.7" stroke="#dadbde" stroke-width="1.5"/><text x="1464" y="1709.0" text-anchor="end" style="font-family:'Liberation Sans',sans-serif;font-size:18px" fill="#666">0.1</text><line x1="1469.6" y1="1672.9" x2="2030" y2="1672.9" stroke="#dadbde" stroke-width="1.5"/><text x="1464" y="1678.2" text-anchor="end" style="font-family:'Liberation Sans',sans-serif;font-size:18px" fill="#666">0.2</text><line x1="1469.6" y1="1642.1" x2="2030" y2="1642.1" stroke="#dadbde" stroke-width="1.5"/><text x="1464" y="1647.4" text-anchor="end" style="font-family:'Liberation Sans',sans-serif;font-size:18px" fill="#666">0.3</text><line x1="1469.6" y1="1611.3" x2="2030" y2="1611.3" stroke="#dadbde" stroke-width="1.5"/><text x="1464" y="1616.6" text-anchor="end" style="font-family:'Liberation Sans',sans-serif;font-size:18px" fill="#666">0.4</text><line x1="1469.6" y1="1580.5" x2="2030" y2="1580.5" stroke="#dadbde" stroke-width="1.5"/><text x="1464" y="1585.8" text-anchor="end" style="font-family:'Liberation Sans',sans-serif;font-size:18px" fill="#666">0.5</text><line x1="1469.6" y1="1549.8" x2="2030" y2="1549.8" stroke="#dadbde" stroke-width="1.5"/><text x="1464" y="1555.1" text-anchor="end" style="font-family:'Liberation Sans',sans-serif;font-size:18px" fill="#666">0.6</text><line x1="1469.6" y1="1519.0" x2="2030" y2="1519.0" stroke="#dadbde" stroke-width="1.5"/><text x="1464" y="1524.3" text-anchor="end" style="font-family:'Liberation Sans',sans-serif;font-size:18px" fill="#666">0.7</text><line x1="1469.6" y1="1488.2" x2="2030" y2="1488.2" stroke="#dadbde" stroke-width="1.5"/><text x="1464" y="1493.5" text-anchor="end" style="font-family:'Liberation Sans',sans-serif;font-size:18px" fill="#666">0.8</text><line x1="1469.6" y1="1457.4" x2="2030" y2="1457.4" stroke="#dadbde" stroke-width="1.5"/><text x="1464" y="1462.7" text-anchor="end" style="font-family:'Liberation Sans',sans-serif;font-size:18px" fill="#666">0.9</text><line x1="1469.6" y1="1426.6" x2="2030" y2="1426.6" stroke="#dadbde" stroke-width="1.5"/><text x="1464" y="1431.9" text-anchor="end" style="font-family:'Liberation Sans',sans-serif;font-size:18px" fill="#666">1.0</text><line x1="1481.0" y1="1426.6" x2="1481.0" y2="1745" stroke="#dadbde" stroke-width="1.5"/><line x1="1590.7" y1="1426.6" x2="1590.7" y2="1745" stroke="#dadbde" stroke-width="1.5"/><line x1="1700.4" y1="1426.6" x2="1700.4" y2="1745" stroke="#dadbde" stroke-width="1.5"/><line x1="1810.2" y1="1426.6" x2="1810.2" y2="1745" stroke="#dadbde" stroke-width="1.5"/><line x1="1919.9" y1="1426.6" x2="1919.9" y2="1745" stroke="#dadbde" stroke-width="1.5"/><line x1="2029.6" y1="1426.6" x2="2029.6" y2="1745" stroke="#dadbde" stroke-width="1.5"/><text x="1535.9" y="1767" text-anchor="middle" style="font-family:'Liberation Sans',sans-serif;font-size:18px" fill="#666">&lt;100KB</text><text x="1645.6" y="1767" text-anchor="middle" style="font-family:'Liberation Sans',sans-serif;font-size:18px" fill="#666">100KB-1MB</text><text x="1755.3" y="1767" text-anchor="middle" style="font-family:'Liberation Sans',sans-serif;font-size:18px" fill="#666">1MB-5MB</text><text x="1865.0" y="1767" text-anchor="middle" style="font-family:'Liberation Sans',sans-serif;font-size:18px" fill="#666">5MB-10MB</text><text x="1974.7" y="1767" text-anchor="middle" style="font-family:'Liberation Sans',sans-serif;font-size:18px" fill="#666">&gt;10MB</text><rect x="1607.8" y="1427.3" width="76" height="307.2" fill="#2ecc71"/><rect x="1717.5" y="1427.3" width="76.2" height="307.2" fill="#f1c40f"/></svg>
</body>
</html>
